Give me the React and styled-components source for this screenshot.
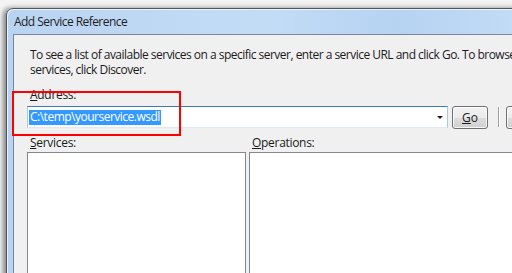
import styled, { createGlobalStyle } from 'styled-components';

const Global = createGlobalStyle`
  html, body {
    margin: 0;
    width: 512px;
    height: 273px;
    overflow: hidden;
    background: #f3f3f3;
  }
  body {
    font-family: "Open Sans", "Noto Sans", sans-serif;
    font-size: 12px;
    color: #1b1b1b;
  }
`;

const Window = styled.div`
  margin: 8px 0 0 6px;
  width: 640px;
  height: 300px;
  border: 1px solid #4f5660;
  border-radius: 7px 7px 0 0;
  background: linear-gradient(90deg, #b9d4f1 0%, #c3dcf6 40%, #b6d3f2 60%, #cfe4fa 100%);
  box-shadow: -3px 0 5px rgba(0, 0, 0, 0.45), inset 1px 1px 0 rgba(255, 255, 255, 0.7);
  display: flex;
  flex-direction: column;
  padding: 0 0 0 6px;
`;

const TitleBar = styled.div`
  height: 25px;
  display: flex;
  align-items: center;
  padding-left: 1px;
  font-size: 12px;
  color: #1e1e1e;
  letter-spacing: -0.55px;
`;

const Content = styled.div`
  position: relative;
  flex: 1;
  background: #f0f0f0;
  border: 1px solid #7a8799;
  border-right: none;
  padding: 12px 0 0 13px;
  display: flex;
  flex-direction: column;
`;

const Intro = styled.div`
  margin: 0 0 0 3px;
  line-height: 15px;
  letter-spacing: -0.52px;
  white-space: nowrap;
`;

const Label = styled.div`
  margin: ${(p) => p.$top}px 0 0 3px;
  line-height: 15px;
  letter-spacing: -0.3px;
  u {
    text-decoration: underline;
    text-underline-offset: 1px;
  }
`;

const AddressRow = styled.div`
  margin-top: 4px;
  display: flex;
  align-items: flex-start;
`;

const Combo = styled.div`
  width: 418px;
  height: 20px;
  background: #fff;
  border: 1px solid #a9c9e6;
  border-top-color: #3d7bad;
  border-bottom-color: #dfe9f3;
  display: flex;
  align-items: center;
  padding-left: 1px;
`;

const Selected = styled.span`
  background: #3399ff;
  color: #fff;
  line-height: 12px;
  padding: 1px 1px 2px;
  letter-spacing: -0.5px;
`;

const Arrow = styled.span`
  margin-left: auto;
  margin-right: 4px;
  width: 0;
  height: 0;
  border-left: 3px solid transparent;
  border-right: 3px solid transparent;
  border-top: 3px solid #1b1b1b;
`;

const Button = styled.div`
  margin-left: ${(p) => p.$gap}px;
  width: ${(p) => p.$w}px;
  height: 21px;
  border: 1px solid #707070;
  border-radius: 3px;
  background: linear-gradient(#f2f2f2 0%, #ebebeb 50%, #dddddd 51%, #cfcfcf 100%);
  box-shadow: inset 0 0 0 1px rgba(255, 255, 255, 0.8);
  display: flex;
  align-items: center;
  justify-content: center;
  color: #1b1b1b;
  flex-shrink: 0;
`;

const Separator = styled.div`
  margin: 1px 0 0 10px;
  width: 1px;
  height: 20px;
  background: #a0a0a0;
  box-shadow: 1px 0 0 #fff;
`;

const Lists = styled.div`
  margin-top: 2px;
  flex: 1;
  display: grid;
  grid-template-columns: 219px 3px 1fr;
`;

const LabelRow = styled.div`
  display: grid;
  grid-template-columns: 222px 1fr;
  margin-top: 6px;
`;

const ListBox = styled.div`
  background: #fff;
  border: 1px solid #828790;
  border-bottom: none;
  grid-column: ${(p) => p.$col};
`;

const Highlight = styled.div`
  position: absolute;
  left: -2px;
  top: 56px;
  width: 165px;
  height: 41px;
  border: 2px solid #ff0000;
  pointer-events: none;
`;

export default function App() {
  return (
    <>
      <Global />
      <Window>
        <TitleBar>Add Service Reference</TitleBar>
        <Content>
          <Intro>
            <div>To see a list of available services on a specific server, enter a service URL and click Go. To browse for available</div>
            <div>services, click Discover.</div>
          </Intro>
          <Label $top={10}>
            <u>A</u>ddress:
          </Label>
          <AddressRow>
            <Combo>
              <Selected>C:\temp\yourservice.wsdl</Selected>
              <Arrow />
            </Combo>
            <Button $w={34} $gap={4}>
              <span>
                <u>G</u>o
              </span>
            </Button>
            <Separator />
            <Button $w={75} $gap={7} aria-label="Discover" />
          </AddressRow>
          <LabelRow>
            <Label $top={0}>
              <u>S</u>ervices:
            </Label>
            <Label $top={0}>
              <u>O</u>perations:
            </Label>
          </LabelRow>
          <Lists>
            <ListBox $col={1} />
            <ListBox $col={3} />
          </Lists>
          <Highlight />
        </Content>
      </Window>
    </>
  );
}
